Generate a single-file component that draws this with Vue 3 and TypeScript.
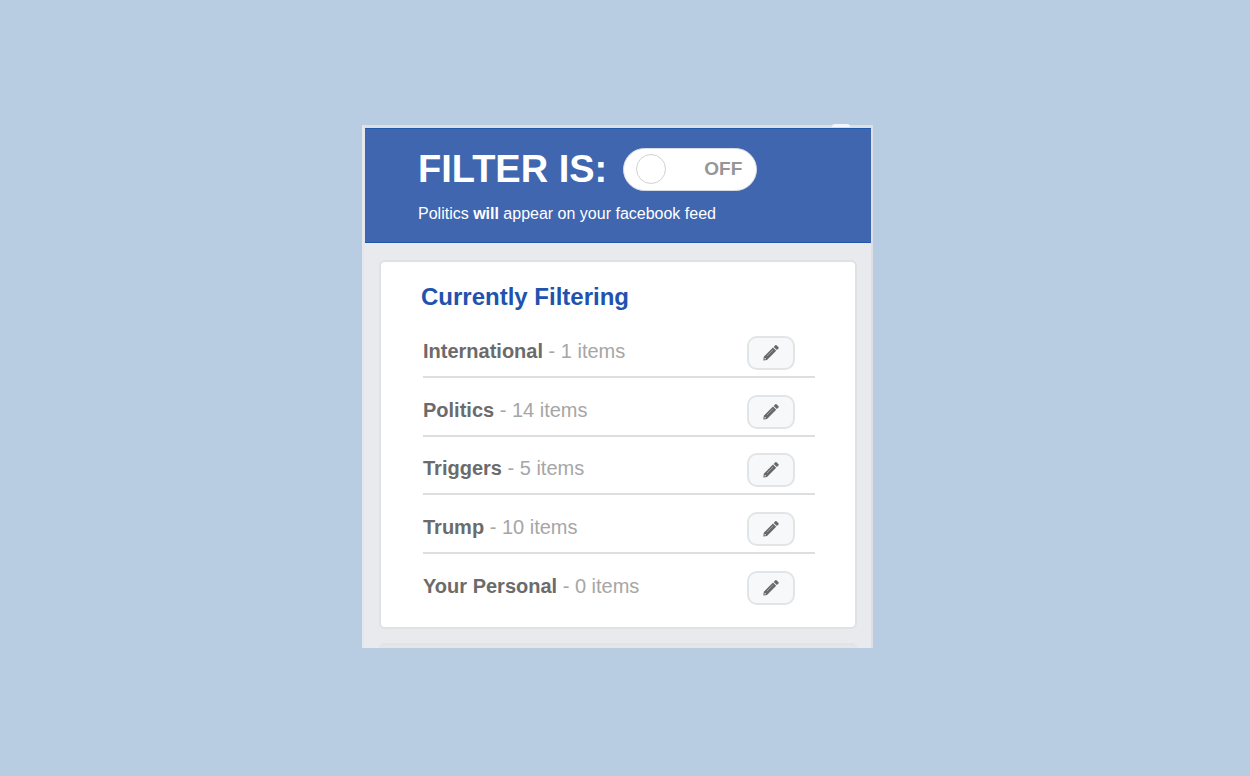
<script setup lang="ts">
import { ref } from 'vue'

interface Category {
  name: string
  count: number
}

const enabled = ref(false)
const categories: Category[] = [
  { name: 'International', count: 1 },
  { name: 'Politics', count: 14 },
  { name: 'Triggers', count: 5 },
  { name: 'Trump', count: 10 },
  { name: 'Your Personal', count: 0 },
]
</script>

<template>
  <div class="page">
    <main class="popup">
      <header class="banner">
        <div class="banner-row">
          <h1 id="filter-label">FILTER IS:</h1>
          <button
            class="switch"
            :class="{ on: enabled }"
            type="button"
            role="switch"
            :aria-checked="enabled"
            aria-labelledby="filter-label"
            @click="enabled = !enabled"
          >
            <span class="knob"></span>
            <span>{{ enabled ? 'ON' : 'OFF' }}</span>
          </button>
        </div>
        <p>Politics <strong>{{ enabled ? "won't" : 'will' }}</strong> appear on your facebook feed</p>
      </header>

      <section class="card">
        <h2>Currently Filtering</h2>
        <ul>
          <li v-for="category in categories" :key="category.name">
            <span class="label"><strong>{{ category.name }}</strong> - {{ category.count }} items</span>
            <button class="edit" type="button" :aria-label="`Edit ${category.name}`">
              <svg viewBox="0 0 18 18" width="18" height="18" aria-hidden="true">
                <path
                  d="M1.3 16.6 L1.8 12.8 L11 3.6 L14.2 6.8 L5 16 Z M11.7 2.9 L13.3 1.3 Q13.9 .8 14.5 1.3 L16.5 3.3 Q17.1 3.9 16.5 4.5 L14.9 6.1 Z"
                  fill="#686868"
                />
                <path d="M2.5 15.4 L2.8 13.7 L4.2 15.1 Z" fill="#f5f7f8" />
                <path d="M5 12 L11.2 5.8" stroke="#9c9d9e" stroke-width="1" />
              </svg>
            </button>
          </li>
        </ul>
      </section>
      <div class="next-card"></div>
    </main>
  </div>
</template>

<style>
body {
  background: #b9cde2;
}
</style>

<style scoped>
.page {
  box-sizing: border-box;
  min-height: 100vh;
  padding: 0 15px 4px 0;
  display: flex;
  align-items: center;
  justify-content: center;
  background: #b9cde2;
  font-family: "Liberation Sans", Arial, Helvetica, sans-serif;
}

.popup {
  position: relative;
  box-sizing: border-box;
  width: 100%;
  max-width: 511px;
  border: 2px solid #dcdfe3;
  border-top-width: 3px;
  border-left: 3px solid #e5e8ec;
  border-bottom: 0;
  background: #e8eaed;
}

.popup::before {
  content: "";
  position: absolute;
  top: -4px;
  right: 21px;
  width: 18px;
  height: 3px;
  border-radius: 4px 4px 0 0;
  background: #f3f6fa;
}

.banner {
  box-sizing: border-box;
  min-height: 114px;
  padding: 19px 24px 18px 53px;
  border-top: 1px solid #2058ac;
  border-bottom: 1px solid #2058ac;
  background: #4066b0;
  color: #fff;
}

.banner-row {
  display: flex;
  align-items: center;
  gap: 16px;
}

h1 {
  margin: 0;
  font-size: 38px;
  line-height: 42px;
}

.banner p {
  margin: 13px 0 0;
  font-size: 16px;
  line-height: 20px;
}

.switch {
  box-sizing: border-box;
  width: 134px;
  height: 43px;
  padding: 0 14px 0 12px;
  display: flex;
  align-items: center;
  justify-content: space-between;
  border: 1px solid #d7dbe2;
  border-radius: 22px;
  background: #fff;
  color: #969696;
  font: bold 19px "Liberation Sans", Arial, sans-serif;
  cursor: pointer;
}

.switch.on {
  flex-direction: row-reverse;
}

.knob {
  box-sizing: border-box;
  width: 30px;
  height: 30px;
  border: 1px solid #d2d2d2;
  border-radius: 50%;
  background: #fff;
}

.card {
  margin: 17px 14px 0;
  padding: 21px 40px 14px;
  border: 2px solid #dfe1e4;
  border-radius: 6px;
  background: #fff;
}

h2 {
  margin: 0;
  color: #2152ad;
  font-size: 24px;
  line-height: 28px;
}

ul {
  margin: 9px 0 0 2px;
  padding: 0;
  list-style: none;
  display: grid;
  grid-auto-rows: 1fr;
  min-height: 293px;
}

li {
  padding: 11px 20px 0 0;
  display: flex;
  align-items: center;
  justify-content: space-between;
  border-bottom: 2px solid #dedede;
}

li:last-child {
  border-bottom-color: transparent;
}

.label {
  padding-bottom: 4px;
  color: #a6a6a6;
  font-size: 20px;
  line-height: 24px;
}

.label strong {
  color: #6b6b6b;
}

.edit {
  box-sizing: border-box;
  width: 48px;
  height: 34px;
  padding: 0;
  display: grid;
  place-items: center;
  border: 2px solid #e2e5e7;
  border-radius: 10px;
  background: #f6f8f9;
  cursor: pointer;
}

.next-card {
  height: 3px;
  margin: 14px 14px 0;
  border-top: 2px solid #e1e3e5;
  border-radius: 6px 6px 0 0;
  background: #e4e6e8;
}
</style>
